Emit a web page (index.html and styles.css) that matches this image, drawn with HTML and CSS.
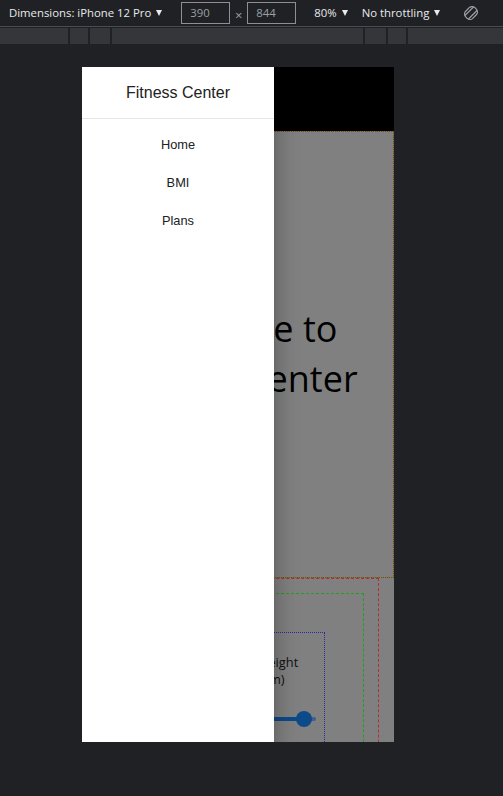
FILE: index.html
```html
<!DOCTYPE html>
<html lang="en">
<head>
<meta charset="utf-8">
<title>Fitness Center</title>
<link rel="stylesheet" href="styles.css">
</head>
<body>
<div class="devtools">
  <div class="toolbar">
    <span class="tb-label dims">Dimensions: iPhone 12 Pro</span><span class="caret caret-dims"></span>
    <span class="dim-input first">390</span><span class="times">×</span><span class="dim-input">844</span>
    <span class="tb-label zoom">80%</span><span class="caret caret-zoom"></span>
    <span class="tb-label throttle">No throttling</span><span class="caret caret-throttle"></span>
    <svg class="rotate" width="16" height="16" viewBox="0 0 16 16" aria-hidden="true">
      <g transform="rotate(45 8 8)" fill="none" stroke="#9aa0a6" stroke-width="1.2">
        <rect x="3" y="1.5" width="10" height="13" rx="4"/>
        <line x1="5.5" y1="2" x2="5.5" y2="14"/>
        <line x1="10.5" y1="2" x2="10.5" y2="14"/>
      </g>
    </svg>
  </div>
  <div class="ruler">
    <span class="seg s1"></span><span class="seg s2"></span><span class="seg s3"></span><span class="seg s4"></span><span class="seg s5"></span><span class="seg s6"></span><span class="seg s7"></span>
  </div>
  <div class="stage">
    <div class="device">
      <div class="app">
        <header class="appbar"></header>
        <section class="hero">
          <h1 class="hero-title">Welcome to<br>Fitness Center</h1>
        </section>
        <section class="bmi">
          <div class="bmi-card">
            <div class="field">
              <div class="field-label">Height (cm)</div>
              <div class="slider">
                <span class="track"></span>
                <span class="track-active"></span>
                <span class="thumb"></span>
              </div>
            </div>
          </div>
        </section>
      </div>
      <aside class="drawer">
        <div class="drawer-title">Fitness Center</div>
        <div class="divider"></div>
        <ul class="menu">
          <li class="menu-item">Home</li>
          <li class="menu-item">BMI</li>
          <li class="menu-item">Plans</li>
        </ul>
      </aside>
    </div>
  </div>
</div>
</body>
</html>
```

FILE: styles.css
```css
* { box-sizing: border-box; }
html, body { margin: 0; padding: 0; }
body {
  background: #202124;
  width: 503px;
  height: 796px;
  overflow: hidden;
  font-family: "Open Sans", "Noto Sans", sans-serif;
}
.devtools { width: 503px; height: 796px; background: #202124; }

.toolbar {
  height: 27px;
  border-bottom: 1px solid #494c50;
  display: flex;
  align-items: center;
  color: #e8eaed;
  font-size: 11.35px;
  padding-left: 9px;
}
.tb-label { white-space: nowrap; line-height: 16px; }
.caret {
  display: inline-block;
  width: 0; height: 0;
  border-left: 3px solid transparent;
  border-right: 3px solid transparent;
  border-top: 6px solid #e8eaed;
  margin-left: 5px;
}
.dim-input {
  width: 49px;
  height: 22px;
  border: 1px solid #8d8f92;
  color: #9aa0a6;
  font-size: 11.35px;
  line-height: 20px;
  padding-left: 8px;
}
.dim-input.first { margin-left: 19px; }
.times { color: #9aa0a6; font-size: 13px; width: 17px; text-align: center; line-height: 16px; padding-top: 3px; }
.zoom { margin-left: 18px; }
.throttle { margin-left: 14px; }
.rotate { margin-left: 23px; }

.ruler {
  margin-top: 1px;
  height: 16px;
  display: flex;
  gap: 2px;
  background: #202124;
}
.seg { background: #35363a; height: 16px; }
.s1 { width: 68px; }
.s2 { width: 18px; }
.s3 { width: 20px; }
.s4 { width: 251px; }
.s5 { width: 21px; }
.s6 { width: 18px; }
.s7 { flex: 1; }

.stage { padding: 23px 0 0 82px; }
.device {
  position: relative;
  width: 312px;
  height: 675px;
  overflow: hidden;
  background: #808080;
}
.app { height: 100%; background: #808080; }
.appbar { height: 64px; background: #000; }
.hero {
  height: 447px;
  border: 1px dashed #1fa01f;
  outline: 1px dotted #b03030;
  outline-offset: -1px;
  display: flex;
  align-items: center;
  justify-content: center;
  padding-bottom: 2px;
}
.hero-title {
  margin: 0;
  font-family: "Open Sans", "Noto Sans", sans-serif;
  font-weight: 400;
  font-size: 36px;
  line-height: 50px;
  text-align: center;
  color: #000;
}
.bmi {
  margin-right: 15px;
  border-top: 1px dashed #b03030;
  border-right: 1px dashed #b03030;
  padding: 14px 14px 0 14px;
  height: 200px;
}
.bmi-card {
  border-top: 1px dashed #1fa01f;
  border-right: 1px dashed #1fa01f;
  height: 200px;
  padding: 38px 38px 0 40px;
}
.field {
  border-top: 1px dotted #2a2aa0;
  border-right: 1px dotted #2a2aa0;
  height: 200px;
  padding: 21px 8px 0 123px;
}
.field-label {
  width: 50px;
  font-family: "Open Sans", "Noto Sans", sans-serif;
  font-size: 12.8px;
  line-height: 17px;
  color: #111;
}
.slider {
  position: relative;
  margin-top: 23px;
  height: 16px;
}
.track {
  position: absolute;
  left: 0; right: 0; top: 6px;
  height: 4px;
  border-radius: 2px;
  background: #3d5f88;
}
.track-active {
  position: absolute;
  left: 0; right: 12px; top: 6px;
  height: 4px;
  border-radius: 2px;
  background: #0d4a8a;
}
.thumb {
  position: absolute;
  right: 4px; top: 0;
  width: 16px; height: 16px;
  border-radius: 50%;
  background: #0d4a8a;
}

.drawer {
  position: absolute;
  left: 0; top: 0;
  width: 192px;
  height: 100%;
  background: #fff;
  box-shadow: 0 6px 8px -4px rgba(0,0,0,.2), 0 13px 19px 2px rgba(0,0,0,.14), 0 5px 24px 4px rgba(0,0,0,.12);
  font-family: "Liberation Sans", Arial, sans-serif;
}
.drawer-title {
  margin: 12.8px 0;
  font-size: 16px;
  line-height: 25.6px;
  text-align: center;
  color: #212121;
}
.divider { height: 1px; background: #e6e6e6; }
.menu { list-style: none; margin: 0; padding: 6.4px 0; }
.menu-item {
  height: 38px;
  line-height: 38px;
  text-align: center;
  font-size: 12.8px;
  color: #212121;
}
```
